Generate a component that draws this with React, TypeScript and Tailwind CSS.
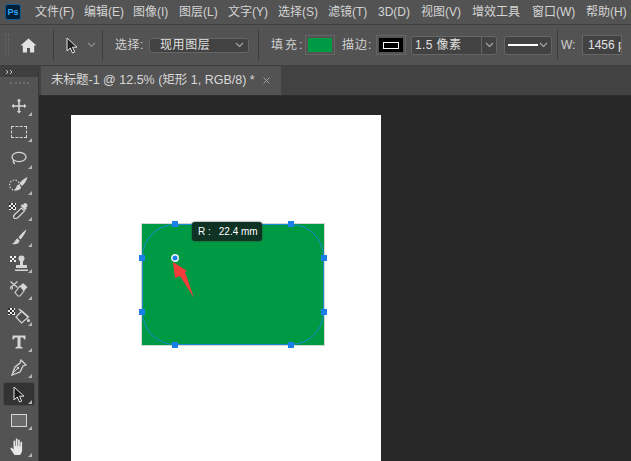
import React from "react";

function Corner() {
  return <span className="absolute right-[3px] bottom-[3px] w-0 h-0 border-l-[4px] border-l-transparent border-b-[4px] border-b-[#b5b5b5]" />;
}

function Chev({ c = "#a8a8a8", w = 9 }: { c?: string; w?: number }) {
  return (
    <svg width={w} height="6" viewBox="0 0 9 6" className="shrink-0">
      <path d="M1 1l3.5 3.5L8 1" fill="none" stroke={c} strokeWidth="1.1" />
    </svg>
  );
}

function Tool({ children, active }: { children: React.ReactNode; active?: boolean }) {
  return (
    <div className="relative w-[32px] h-[26.2px] shrink-0 flex items-center justify-center">
      {active && <div className="absolute inset-x-0 inset-y-px rounded-[3px] bg-[#333333] border border-[#484848]" />}
      <div className="relative flex items-center justify-center">{children}</div>
      <Corner />
    </div>
  );
}

const W = "#d6d6d6";

function Checker() {
  return (
    <>
      <rect x="0" y="0" width="7" height="7" fill="#eeeeee" />
      <path d="M0 0h2v2H0zM4 0h2v2H4zM2 2h2v2H2zM6 2h1v2H6zM0 4h2v2H0zM4 4h2v2H4zM2 6h2v1H2z" fill="#2e2e2e" />
    </>
  );
}

const menus: [string, string][] = [
  ["文件(F)", "w-[49px]"],
  ["编辑(E)", "w-[49px]"],
  ["图像(I)", "w-[46px]"],
  ["图层(L)", "w-[49px]"],
  ["文字(Y)", "w-[50px]"],
  ["选择(S)", "w-[50px]"],
  ["滤镜(T)", "w-[50px]"],
  ["3D(D)", "w-[43px]"],
  ["视图(V)", "w-[51px]"],
  ["增效工具", "w-[60px]"],
  ["窗口(W)", "w-[54px]"],
  ["帮助(H)", "w-[50px]"],
];

export default function App() {
  return (
    <div className="w-[631px] h-[461px] overflow-hidden bg-[#535353] flex flex-col text-[#d8d8d8] font-['Liberation_Sans','Noto_Sans_CJK_SC',sans-serif]">
      {/* menu bar */}
      <div className="h-[25px] shrink-0 flex items-center border-b border-[#3f3f3f]">
        <div className="w-[35px] shrink-0 pl-[5px]">
          <div className="w-[16px] h-[16px] rounded-[3px] bg-[#001e36] border border-[#0e5c94] flex items-center justify-center text-[9px] font-bold leading-none text-[#31a8ff]">Ps</div>
        </div>
        {menus.map(([m, w]) => (
          <div key={m} className={`${w} shrink-0 whitespace-nowrap text-[12px] leading-none text-[#d4d4d4]`}>{m}</div>
        ))}
      </div>

      {/* options bar */}
      <div className="h-[41px] shrink-0 flex items-center border-b border-[#3f3f3f] text-[12px] whitespace-nowrap">
        <div className="w-[4px] h-[22px] ml-[5px] border-x border-dotted border-[#6a6a6a]" />
        <div className="w-[44px] pl-[11px] flex">
          <svg width="17" height="15" viewBox="0 0 17 15"><path d="M8.5 0.5L0.5 7.5h2.3V14.5h4.2V10h3v4.5h4.2V7.5h2.3z" fill="#e2e2e2" /></svg>
        </div>
        <div className="w-px h-[31px] bg-[#3d3d3d]" />
        <div className="w-[48px] pl-[12px] flex items-center gap-[9px]">
          <svg width="12" height="17" viewBox="0 0 12 17"><path d="M1 1v13l3.3-3 2.2 5 2.2-1-2.2-4.8H11z" fill="#222" stroke="#e4e4e4" strokeWidth="1" /></svg>
          <Chev c="#8e8e8e" />
        </div>
        <div className="w-px h-[31px] bg-[#3d3d3d]" />
        <div className="ml-[12px] w-[34px] tracking-[0.5px] text-[#d0d0d0]">选择:</div>
        <div className="w-[100px] h-[15px] rounded-[3px] bg-[#424242] border border-[#666] flex items-center justify-between pl-[10px] pr-[4px] text-[#e0e0e0] tracking-[0.6px]">
          <span>现用图层</span>
          <Chev />
        </div>
        <div className="ml-[9px] w-px h-[31px] bg-[#3d3d3d]" />
        <div className="ml-[12px] w-[34px] tracking-[2px] text-[#d0d0d0]">填充:</div>
        <div className="w-[30px] h-[20px] border border-[#666] p-[2px]"><div className="w-full h-full bg-[#009a45]" /></div>
        <div className="ml-[7px] w-[34px] tracking-[1px] text-[#d0d0d0]">描边:</div>
        <div className="w-[30px] h-[20px] border border-[#666] p-[2px]">
          <div className="w-full h-full bg-black flex items-center justify-center"><div className="w-[16px] h-[7px] border border-white" /></div>
        </div>
        <div className="ml-[5px] w-[86px] h-[19px] rounded-[3px] bg-[#424242] border border-[#666] flex items-center justify-between text-[#e0e0e0]">
          <span className="pl-[3px] tracking-[0.4px]">1.5 像素</span>
          <span className="w-[15px] h-full border-l border-[#666] flex items-center justify-center"><Chev /></span>
        </div>
        <div className="ml-[7px] w-[48px] h-[19px] rounded-[3px] bg-[#424242] border border-[#666] flex items-center justify-between px-[3px]">
          <div className="w-[30px] h-[2px] bg-white" />
          <Chev />
        </div>
        <div className="ml-[5px] w-px h-[30px] bg-[#3d3d3d]" />
        <div className="ml-[3px] w-[21px] text-[#d0d0d0]">W:</div>
        <div className="w-[40px] h-[20px] bg-[#424242] border border-[#666] flex items-center pl-[5px] overflow-hidden text-[#e0e0e0]">1456 px</div>
      </div>

      {/* body */}
      <div className="flex-1 min-h-0 flex">
        {/* toolbar */}
        <div className="w-[39px] shrink-0 flex flex-col border-r border-[#383838]">
          <div className="h-[11px] shrink-0 bg-[#3f3f3f] flex items-center pl-[5px]">
            <svg width="8" height="6" viewBox="0 0 8 6"><path d="M1 1l2 2-2 2M5 1l2 2-2 2" fill="none" stroke="#c8c8c8" strokeWidth="1" /></svg>
          </div>
          <div className="h-[16px] shrink-0 flex items-center justify-center pb-[2px]"><div className="w-[19px] h-[4px] border-t-2 border-dotted border-[#6d6d6d]" /></div>
          <div className="flex flex-col items-center pr-px">
            <Tool><svg width="16" height="16" viewBox="0 0 16 16"><path d="M8 .5l2.2 2.7H8.800v4H13V5.800L15.500 8 13 10.200V8.800H8.800V13h1.400L8 15.500 5.800 13h1.400V8.800H3v1.400L.5 8 3 5.800v1.400h4.200v-4H5.800z" fill={W} /></svg></Tool>
            <Tool><div className="w-[16px] h-[12px] border border-dashed border-[#d6d6d6]" /></Tool>
            <Tool><svg width="17" height="15" viewBox="0 0 17 15"><ellipse cx="9" cy="6" rx="7" ry="4.700" fill="none" stroke={W} strokeWidth="1.300" /><path d="M3.500 9c-.8 2 .5 3 1.200 4" fill="none" stroke={W} strokeWidth="1.400" /></svg></Tool>
            <Tool><svg width="19" height="15" viewBox="0 0 19 15"><circle cx="5.500" cy="8" r="5" fill="none" stroke={W} strokeWidth="1.200" strokeDasharray="1.500 1.500" /><path d="M18.500 0c-2.500 1-6 3.500-8 6.500l2.500 2.500c2.500-2 4.500-5 5.500-9zM9.500 7.500c-2 .5-2 3.500-4.500 6 3.500.5 7-.8 7-3.500z" fill={W} /></svg></Tool>
            <Tool><svg width="20" height="16" viewBox="0 0 20 16"><Checker /><path d="M15.500 0c1.500 0 3 .8 3 2.500 0 1-.6 1.700-1.500 2.200l.7 1.300-1.500 1.200-4.500-4.500 1.300-1.400 1.200.8c.2-.9.7-1.900 1.800-2.100z" fill={W} /><path d="M12.500 5l3 3-6.500 6.500c-1 1-3 1.300-3.800.5s-.5-2.500.5-3.500z" fill="#4d4d4d" stroke={W} strokeWidth="1.200" /></svg></Tool>
            <Tool><svg width="16" height="16" viewBox="0 0 16 16"><path d="M15.500.5c-2 1-6 5-8 8l2 2c2.500-2.500 5-7 6-10zM6.500 9.500c-2.500.5-2 4-5.500 5.500 4 1 7.500-.5 7.500-3.500z" fill={W} /></svg></Tool>
            <Tool><svg width="20" height="17" viewBox="0 0 20 17"><path d="M1 1h2v2H1zM5 1h2v2H5zM3 3h2v2H3zM1 5h2v2H1zM5 5h2v2H5z" fill="#eee" /><circle cx="12.500" cy="3.500" r="3" fill={W} /><path d="M11 6h3v4h4v3H7v-3h4z" fill={W} /><rect x="6" y="14.500" width="13" height="1.500" fill={W} /></svg></Tool>
            <Tool><svg width="18" height="16" viewBox="0 0 18 16"><path d="M.5.5l7 6M7.500.5l-7 6" stroke={W} strokeWidth="1.200" /><circle cx="1.500" cy="7" r="1.200" fill="none" stroke={W} /><path d="M10 5l3-3 4.500 4-3.500 4z" fill={W} /><path d="M10 5l4 5-4 5H8l-3-3.500z" fill="#4d4d4d" stroke={W} strokeWidth="1.100" /></svg></Tool>
            <Tool><svg width="22" height="16" viewBox="0 0 22 16"><Checker /><path d="M14 3l-6 6 5.500 6 7-6z" fill="#4d4d4d" stroke={W} strokeWidth="1.200" /><path d="M11 1l9 8" stroke={W} strokeWidth="1.400" /><circle cx="20.500" cy="12.500" r="1.500" fill={W} /></svg></Tool>
            <Tool><svg width="14" height="14" viewBox="0 0 14 14"><path d="M.5.5h13v4h-1.200L11 2.500H8.500v9l2 .8v1.200h-7v-1.200l2-.8v-9H3L1.700 4.500H.5z" fill={W} /></svg></Tool>
            <Tool><svg width="17" height="17" viewBox="0 0 17 17"><path d="M11 1l5 5-3 1-3 6-8 3 3-8 5-4z" fill="none" stroke={W} strokeWidth="1.300" /><path d="M2 15l5-5" stroke={W} /><circle cx="8" cy="9" r="1.200" fill={W} /></svg></Tool>
            <Tool active><svg width="12" height="17" viewBox="0 0 12 17"><path d="M1 1v13l3.300-3 2.200 5 2.200-1-2.200-4.800H11z" fill="#1c1c1c" stroke="#e4e4e4" strokeWidth="1" /></svg></Tool>
            <Tool><div className="w-[16px] h-[13px] bg-[#6a6a6a] border border-[#d6d6d6]" /></Tool>
            <Tool><svg width="17" height="18" viewBox="0 0 17 18"><path d="M4.500 17l-4-6c-.5-1 .8-1.800 1.500-1l1.500 1.500V3.500c0-1.200 1.700-1.200 1.700 0V8h.6V1.500c0-1.200 1.700-1.200 1.700 0V8h.6V2.500c0-1.200 1.700-1.200 1.700 0V8.500h.6V4.500c0-1.200 1.700-1.200 1.700 0V12c0 2-1 3.500-2 5z" fill="#e8e8e8" /></svg></Tool>
          </div>
        </div>

        {/* document area */}
        <div className="flex-1 min-w-0 flex flex-col">
          <div className="h-[30px] shrink-0 bg-[#424242] border-b border-[#2e2e2e] flex">
            <div className="w-[240px] ml-[2px] bg-[#535353] flex items-center pl-[10px] gap-[8px] text-[12.5px] text-[#d8d8d8] whitespace-nowrap">
              <span>未标题-1 @ 12.5% (矩形 1, RGB/8) *</span>
              <svg width="7" height="7" viewBox="0 0 7 7"><path d="M.5.5l6 6M6.500.5l-6 6" stroke="#a0a0a0" /></svg>
            </div>
          </div>
          <div className="flex-1 min-h-0 bg-[#282828] pl-[32px] pt-[19px]">
            {/* white artboard */}
            <div className="w-[310px] h-[400px] bg-white pl-[71px] pt-[109px]">
              <div className="relative w-[182px] h-[121px] bg-[#009a45] outline outline-1 outline-[#cfd8d2]">
                <div className="absolute inset-0 rounded-[33px] border border-[#1f86cf]" />
                {([
                  "left-[30px] -top-[3px]", "left-[146px] -top-[3px]",
                  "-left-[3px] top-[31px]", "-left-[3px] top-[85px]",
                  "left-[179px] top-[31px]", "left-[179px] top-[85px]",
                  "left-[30px] top-[118px]", "left-[146px] top-[118px]",
                ]).map((p, i) => (
                  <div key={i} className={`absolute ${p} w-[6px] h-[6px] bg-[#1a7fe8]`} />
                ))}
                <svg className="absolute left-[29px] top-[30px]" width="28" height="46" viewBox="0 0 28 46">
                  <path d="M2 8L16 17 14 18 23 44 9 22 4 24z" fill="#f23b3b" />
                  <circle cx="4" cy="4" r="3.200" fill="#1a7fe8" stroke="white" strokeWidth="1.400" />
                  <circle cx="4" cy="4" r="1.300" fill="#1a7fe8" />
                </svg>
                <div className="absolute left-[50px] -top-[2px] w-[70px] h-[19px] rounded-[3px] bg-[#0e3224] flex items-center pl-[6px] text-[10px] text-white whitespace-nowrap shadow-[0_0_2px_#333]">
                  <span className="mr-[8px]">R :</span><span>22.4 mm</span>
                </div>
              </div>
            </div>
          </div>
        </div>
      </div>
    </div>
  );
}
